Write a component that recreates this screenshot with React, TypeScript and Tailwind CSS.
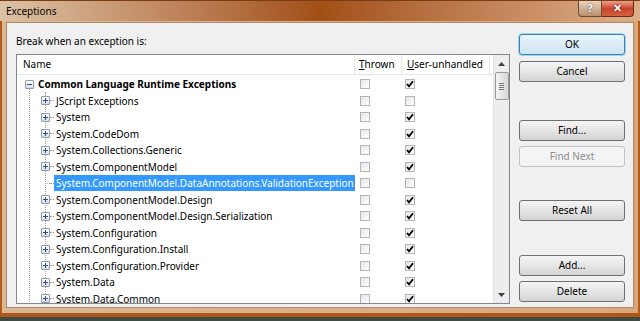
import React from 'react'

type Row = { label: string; thrown: boolean; user: boolean; leaf?: boolean; selected?: boolean }

const ROWS: Row[] = [
  { label: 'JScript Exceptions', thrown: false, user: false },
  { label: 'System', thrown: false, user: true },
  { label: 'System.CodeDom', thrown: false, user: true },
  { label: 'System.Collections.Generic', thrown: false, user: true },
  { label: 'System.ComponentModel', thrown: false, user: true },
  { label: 'System.ComponentModel.DataAnnotations.ValidationException', thrown: false, user: false, leaf: true, selected: true },
  { label: 'System.ComponentModel.Design', thrown: false, user: true },
  { label: 'System.ComponentModel.Design.Serialization', thrown: false, user: true },
  { label: 'System.Configuration', thrown: false, user: true },
  { label: 'System.Configuration.Install', thrown: false, user: true },
  { label: 'System.Configuration.Provider', thrown: false, user: true },
  { label: 'System.Data', thrown: false, user: true },
  { label: 'System.Data.Common', thrown: false, user: true },
]

function ExpandBox({ minus }: { minus?: boolean }) {
  return (
    <span className="relative w-[9px] h-[9px] shrink-0 border border-[#8f9ba8] rounded-[1px] bg-gradient-to-b from-white to-[#d9dee4]">
      <span className="absolute left-[1px] top-[3px] w-[5px] h-[1px] bg-[#2c4f8a]" />
      {!minus && <span className="absolute left-[3px] top-[1px] w-[1px] h-[5px] bg-[#2c4f8a]" />}
    </span>
  )
}

function Check({ on }: { on: boolean }) {
  return (
    <span className="w-[10px] h-[10px] border border-[#b5b5b5] bg-gradient-to-br from-[#e6e6e6] to-white flex items-center justify-center">
      {on && (
        <svg width="8" height="8" viewBox="0 0 8 8">
          <path d="M1 4 L3 6.3 L7 1.2" stroke="#000" strokeWidth="1.8" fill="none" />
        </svg>
      )}
    </span>
  )
}

function Btn({ label, def, disabled, className = '' }: { label: string; def?: boolean; disabled?: boolean; className?: string }) {
  const base = disabled
    ? 'border-[#c0c4c7] bg-[#f4f4f4] text-[#8d8d8d]'
    : def
      ? 'border-[#3c7fb1] bg-gradient-to-b from-[#eaf6fd] via-[#dcecf7] to-[#cde4f2] text-black shadow-[0_0_0_1px_#9ed4f0]'
      : 'border-[#707070] bg-gradient-to-b from-[#f4f4f4] via-[#e6e6e6] to-[#d3d3d3] text-black'
  return (
    <div className={`h-[21px] w-[106px] rounded-[3px] border flex items-center justify-center text-[10px] ${base} ${className}`}>
      {label}
    </div>
  )
}

export default function App() {
  return (
    <div className="w-[640px] h-[321px] flex flex-col overflow-hidden bg-[#3f4a40]" style={{ fontFamily: '"Noto Sans", "Open Sans", sans-serif' }}>
      {/* title bar */}
      <div className="h-[21px] shrink-0 flex bg-gradient-to-r from-[#dcc3a6] via-[#a24f14] to-[#dcb08a] border-t border-[#7a3c10]">
        <span className="pl-[6px] pt-[3px] text-[10px] text-black">Exceptions</span>
        <div className="ml-auto mr-[6px] flex items-start">
          <div className="w-[24px] h-[16px] rounded-bl-[4px] border border-t-0 border-[#6b4a33] bg-gradient-to-b from-[#e9d4c0] to-[#b98f6c] flex items-center justify-center text-[11px] font-bold text-white [text-shadow:0_0_2px_#333]">?</div>
          <div className="w-[32px] h-[16px] rounded-br-[4px] border border-t-0 border-l-0 border-[#6b2a1a] bg-gradient-to-b from-[#e9a08c] via-[#c8442a] to-[#d8603e] flex items-center justify-center text-[11px] font-bold text-white [text-shadow:0_0_2px_#400]">✕</div>
        </div>
      </div>

      {/* frame */}
      <div className="flex-1 flex min-h-0 bg-gradient-to-r from-[#d9b995] to-[#d9a77c]">
        <div className="w-[6px] shrink-0 border-l-2 border-[#b65a1c]" />
        <div className="flex-1 mt-[1px] mb-[5px] bg-[#f0f0f0] border border-[#b08a68] flex">
          {/* left column */}
          <div className="pl-[9px] pt-[11px] flex flex-col">
            <div className="text-[10px] leading-[14px] text-black">Break when an exception is:</div>
            <div className="mt-[6px] w-[494px] h-[250px] border border-[#828790] bg-white flex overflow-hidden">
              <div className="flex-1 flex flex-col min-w-0">
                {/* header */}
                <div className="h-[20px] shrink-0 flex border-b border-[#e5e5e5] text-[10px] text-black whitespace-nowrap">
                  <div className="w-[338px] pl-[6px] flex items-center border-r border-[#e5e5e5]">Name</div>
                  <div className="w-[47px] pl-[4px] flex items-center border-r border-[#e5e5e5]"><span className="underline">T</span>hrown</div>
                  <div className="w-[88px] pl-[5px] flex items-center border-r border-[#e5e5e5]"><span className="underline">U</span>ser-unhandled</div>
                </div>
                {/* rows */}
                <div className="relative pt-[1px] text-[10px] text-black">
                  <span className="absolute left-[12px] top-[13px] h-[240px] border-l border-dotted border-[#a0a0a0]" />
                  <span className="absolute left-[28px] top-[17px] h-[222px] border-l border-dotted border-[#a0a0a0]" />
                  <div className="h-[16.5px] flex items-center">
                    <div className="w-[338px] flex items-center pl-[8px]">
                      <ExpandBox minus />
                      <span className="ml-[4px] font-bold leading-none whitespace-nowrap">Common Language Runtime Exceptions</span>
                    </div>
                    <div className="w-[47px] pl-[5px]"><Check on={false} /></div>
                    <div className="pl-[3px]"><Check on /></div>
                  </div>
                  {ROWS.map(r => (
                    <div key={r.label} className="h-[16.5px] flex items-center">
                      <div className="w-[338px] shrink-0 flex items-center pl-[24px] relative z-10">
                        {r.leaf ? (
                          <span className="w-[9px] h-[9px] shrink-0 flex items-center"><span className="ml-[4px] w-[5px] border-t border-dotted border-[#a0a0a0]" /></span>
                        ) : (
                          <ExpandBox />
                        )}
                        <span className="w-[4px] shrink-0 border-t border-dotted border-[#a0a0a0]" />
                        <span className={`pl-[2px] pr-[1px] leading-[16px] whitespace-nowrap ${r.selected ? 'bg-[#3399ff] text-white' : ''}`}>{r.label}</span>
                      </div>
                      <div className="w-[47px] shrink-0 pl-[5px]"><Check on={r.thrown} /></div>
                      <div className="pl-[3px]"><Check on={r.user} /></div>
                    </div>
                  ))}
                </div>
              </div>
              {/* scrollbar */}
              <div className="w-[16px] shrink-0 bg-[#ededed] border-l border-[#e3e3e3] flex flex-col items-center">
                <div className="h-[17px] w-full flex items-center justify-center">
                  <svg width="7" height="4" viewBox="0 0 7 4"><path d="M0 4 L3.5 0 L7 4 Z" fill="#404040" /></svg>
                </div>
                <div className="w-[14px] h-[28px] rounded-[2px] border border-[#979797] bg-gradient-to-r from-[#f3f3f3] to-[#d8d8d8] flex flex-col items-center justify-center gap-[1px]">
                  <span className="w-[5px] h-[1px] bg-[#777]" />
                  <span className="w-[5px] h-[1px] bg-[#777]" />
                  <span className="w-[5px] h-[1px] bg-[#777]" />
                  <span className="w-[5px] h-[1px] bg-[#777]" />
                </div>
                <div className="flex-1" />
                <div className="h-[17px] w-full flex items-center justify-center">
                  <svg width="7" height="4" viewBox="0 0 7 4"><path d="M0 0 L3.5 4 L7 0 Z" fill="#404040" /></svg>
                </div>
              </div>
            </div>
          </div>

          {/* right column buttons */}
          <div className="ml-[9px] pt-[11px] flex flex-col">
            <Btn label="OK" def />
            <Btn label="Cancel" className="mt-[6px]" />
            <Btn label="Find..." className="mt-[38px]" />
            <Btn label="Find Next" disabled className="mt-[5px]" />
            <Btn label="Reset All" className="mt-[33px]" />
            <Btn label="Add..." className="mt-[34px]" />
            <Btn label="Delete" className="mt-[5px]" />
          </div>
        </div>
        <div className="w-[6px] shrink-0 border-r-2 border-[#b65a1c]" />
      </div>
      <div className="h-[4px] shrink-0 bg-[#b0561a]" />
      <div className="h-[4px] shrink-0" />
    </div>
  )
}
